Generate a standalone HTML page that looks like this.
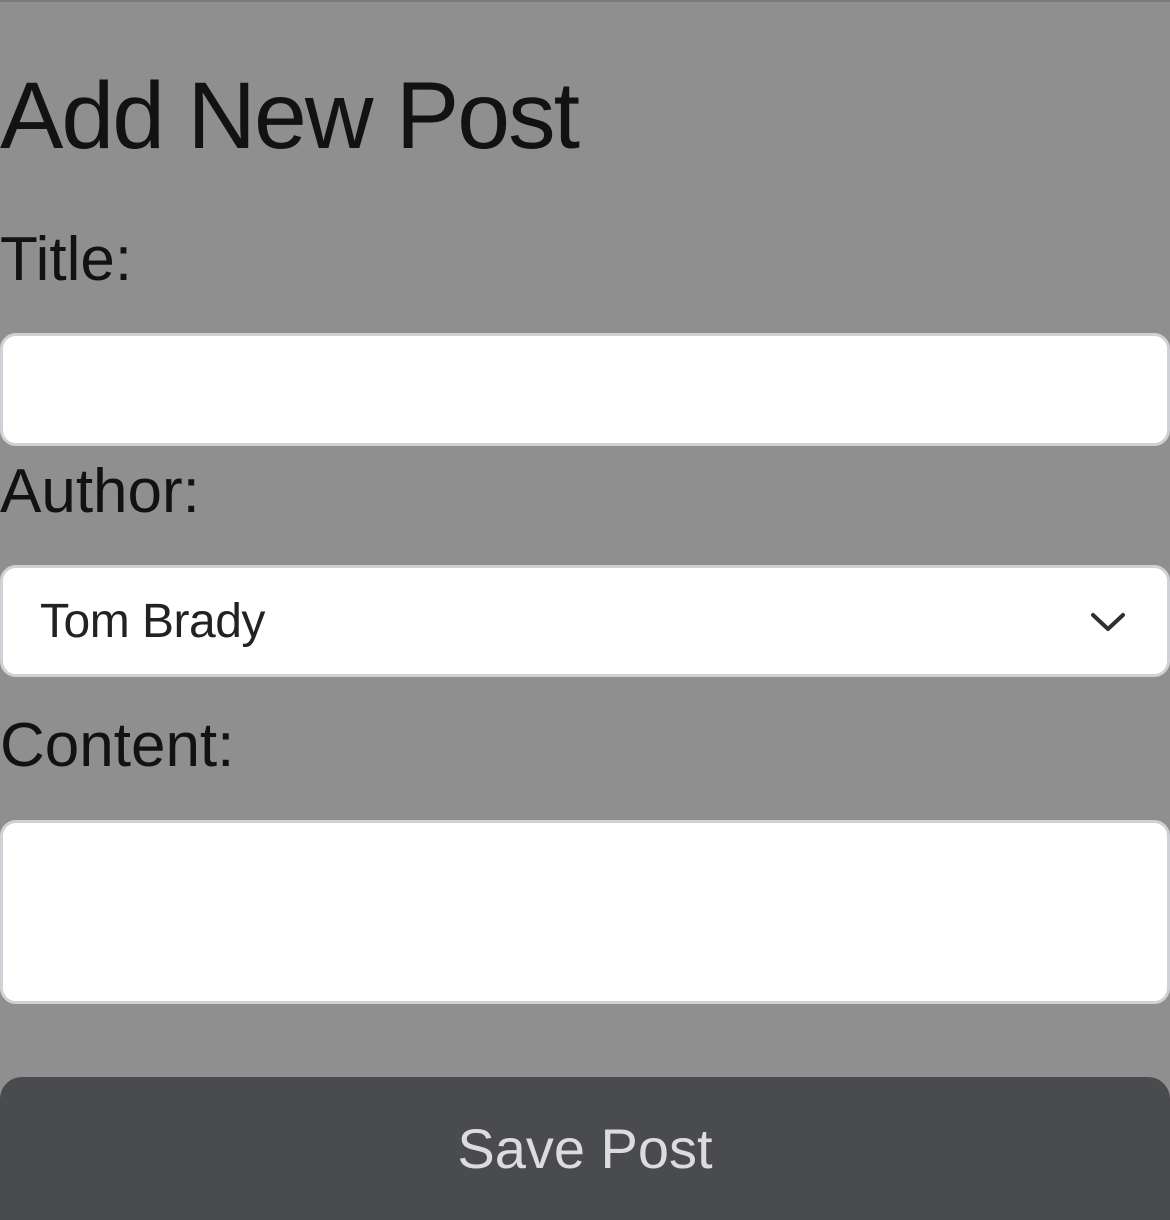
<!DOCTYPE html>
<html><head><style>
html,body{margin:0;padding:0;overflow:hidden}
body{width:1170px;height:1220px;background:#8f8f8f;position:relative;overflow:hidden;font-family:"Liberation Sans",sans-serif;color:#121212}
.t{position:absolute;left:0;margin:0;white-space:nowrap;line-height:1}
.box{position:absolute;left:0;width:1170px;box-sizing:border-box;background:#fff;border:3px solid #d0d1d6;border-radius:16px}
</style></head><body>
<div style="position:absolute;left:0;top:0;width:1170px;height:2px;background:#7a7a7a"></div>
<div class="t" style="top:69px;font-size:95px;letter-spacing:-2px">Add New Post</div>
<div class="t" style="top:229px;font-size:62px">Title:</div>
<div class="box" style="top:333px;height:113px"></div>
<div class="t" style="top:461px;font-size:62px">Author:</div>
<div class="box" style="top:565px;height:112px">
<div class="t" style="left:37px;top:30px;font-size:48px;letter-spacing:-0.5px;color:#222">Tom Brady</div>
<svg style="position:absolute;left:1087px;top:43px" width="36" height="22" viewBox="0 0 36 22"><path d="M3 4 L18 18 L33 4" fill="none" stroke="#2d3035" stroke-width="4" stroke-linecap="round" stroke-linejoin="round"/></svg>
</div>
<div class="t" style="top:715px;font-size:62px">Content:</div>
<div class="box" style="top:820px;height:184px"></div>
<div style="position:absolute;left:0;top:1077px;width:1170px;height:143px;background:#4a4b4f;border-radius:22px 22px 0 0"></div>
<div class="t" style="top:1121px;width:1170px;text-align:center;font-size:56px;color:#dcdcdc">Save Post</div>
</body></html>
